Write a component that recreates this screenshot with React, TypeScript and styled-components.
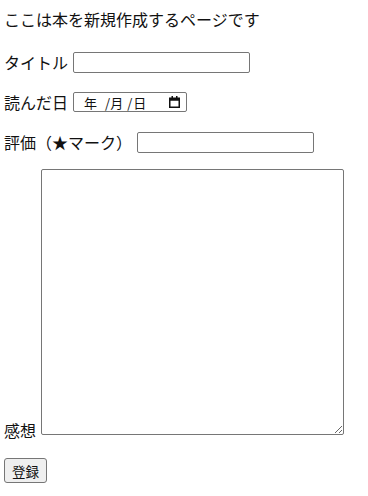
import React from "react";
import styled, { createGlobalStyle } from "styled-components";

const Global = createGlobalStyle`
  html, body { margin: 0; padding: 0; background: #fff; }
  body {
    font-family: "Noto Sans CJK JP", "Noto Sans", sans-serif;
    font-size: 16px;
    color: #111;
  }
`;

const Page = styled.form`
  display: flex;
  flex-direction: column;
  align-items: flex-start;
  padding: 8px 4px;
`;

const Heading = styled.p`
  margin: 0;
  line-height: 22px;
`;

const Row = styled.div<{ $top: number; $align?: string }>`
  display: flex;
  align-items: ${(p) => p.$align ?? "center"};
  gap: 5px;
  margin-top: ${(p) => p.$top}px;
  height: auto;
`;

const Label = styled.label`
  line-height: 22px;
  white-space: nowrap;
`;

const TextInput = styled.input`
  box-sizing: border-box;
  width: 177px;
  height: 21px;
  margin: 0;
  padding: 1px 2px;
  border: 1px solid #767676;
  border-radius: 2px;
  font: 13px "Noto Sans CJK JP", sans-serif;
  background: #fff;
`;

const DateBox = styled.div`
  box-sizing: border-box;
  width: 114px;
  height: 20px;
  display: flex;
  align-items: center;
  padding: 0 0 0 10px;
  border: 1px solid #767676;
  border-radius: 2px;
  font: 13px/1 "Noto Sans CJK JP", sans-serif;
  color: #111;
  background: #fff;
`;

const Seg = styled.span<{ $ml?: number }>`
  margin-left: ${(p) => p.$ml ?? 0}px;
`;

const CalIcon = styled.svg`
  margin-left: auto;
  margin-right: 6px;
  display: block;
`;

const TextArea = styled.textarea`
  box-sizing: border-box;
  width: 303px;
  height: 266px;
  margin: 0 0 6px 0;
  padding: 2px;
  border: 1px solid #767676;
  border-radius: 2px;
  font: 13px "Noto Sans CJK JP", sans-serif;
`;

const Button = styled.button`
  box-sizing: border-box;
  width: 43px;
  height: 25px;
  margin-top: 17px;
  padding: 0;
  border: 1px solid #767676;
  border-radius: 3px;
  background: #efefef;
  font: 13.5px "Noto Sans CJK JP", sans-serif;
  color: #111;
`;

export default function App() {
  return (
    <>
      <Global />
      <Page onSubmit={(e) => e.preventDefault()}>
        <Heading>ここは本を新規作成するページです</Heading>
        <Row $top={21}>
          <Label>タイトル</Label>
          <TextInput type="text" />
        </Row>
        <Row $top={18}>
          <Label>読んだ日</Label>
          <DateBox>
            <Seg>年</Seg>
            <Seg $ml={8}>/</Seg>
            <Seg $ml={0}>月</Seg>
            <Seg $ml={4}>/</Seg>
            <Seg $ml={1}>日</Seg>
            <CalIcon width="11" height="12" viewBox="0 0 11 12">
              <rect x="0.75" y="2.25" width="9.5" height="9" fill="none" stroke="#111" strokeWidth="1.5" />
              <rect x="0.75" y="2.25" width="9.5" height="2.5" fill="#111" />
              <rect x="2.5" y="0" width="1.5" height="2.5" fill="#111" />
              <rect x="7" y="0" width="1.5" height="2.5" fill="#111" />
            </CalIcon>
          </DateBox>
        </Row>
        <Row $top={18}>
          <Label>評価（★マーク）</Label>
          <TextInput type="text" />
        </Row>
        <Row $top={16} $align="flex-end">
          <Label>感想</Label>
          <TextArea />
        </Row>
        <Button type="submit">登録</Button>
      </Page>
    </>
  );
}
